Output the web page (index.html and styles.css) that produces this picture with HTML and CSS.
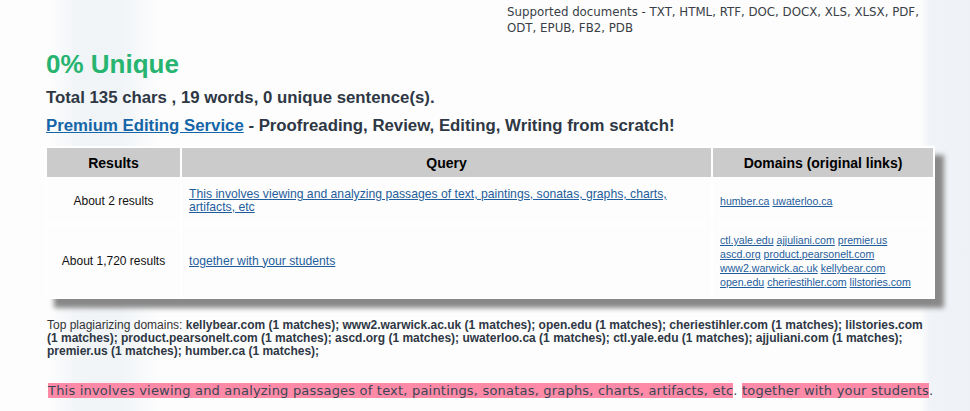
FILE: index.html
```html
<!DOCTYPE html>
<html>
<head>
<meta charset="utf-8">
<link rel="stylesheet" href="styles.css">
</head>
<body>
<div class="page">
  <div class="supported">Supported documents - TXT, HTML, RTF, DOC, DOCX, XLS, XLSX, PDF, ODT, EPUB, FB2, PDB</div>
  <h1 class="unique">0% Unique</h1>
  <p class="total">Total 135 chars , 19 words, 0 unique sentence(s).</p>
  <p class="premium"><a href="#">Premium Editing Service</a> - Proofreading, Review, Editing, Writing from scratch!</p>
  <table class="results">
    <thead>
      <tr><th class="c1">Results</th><th class="c2">Query</th><th class="c3">Domains (original links)</th></tr>
    </thead>
    <tbody>
      <tr class="r1">
        <td class="num">About 2 results</td>
        <td class="query"><a href="#">This involves viewing and analyzing passages of text, paintings, sonatas, graphs, charts, artifacts, etc</a></td>
        <td class="domains"><a href="#">humber.ca</a> <a href="#">uwaterloo.ca</a></td>
      </tr>
      <tr class="r2">
        <td class="num">About 1,720 results</td>
        <td class="query"><a href="#">together with your students</a></td>
        <td class="domains"><a href="#">ctl.yale.edu</a> <a href="#">ajjuliani.com</a> <a href="#">premier.us</a> <a href="#">ascd.org</a> <a href="#">product.pearsonelt.com</a> <a href="#">www2.warwick.ac.uk</a> <a href="#">kellybear.com</a> <a href="#">open.edu</a> <a href="#">cheriestihler.com</a> <a href="#">lilstories.com</a></td>
      </tr>
    </tbody>
  </table>
  <p class="top">Top plagiarizing domains: <b>kellybear.com (1 matches); www2.warwick.ac.uk (1 matches); open.edu (1 matches); cheriestihler.com (1 matches); lilstories.com (1 matches); product.pearsonelt.com (1 matches); ascd.org (1 matches); uwaterloo.ca (1 matches); ctl.yale.edu (1 matches); ajjuliani.com (1 matches); premier.us (1 matches); humber.ca (1 matches);</b></p>
  <p class="hl"><span class="mark">This involves viewing and analyzing passages of text, paintings, sonatas, graphs, charts, artifacts, etc</span>. <span class="mark">together with your students</span>.</p>
</div>
</body>
</html>
```
FILE: styles.css
```css
html, body {
  margin: 0;
  padding: 0;
}
body {
  background: linear-gradient(to right, #fdfdfd 0, #fdfdfd 50px, #f2f5f8 75px, #f0f4f7 120px, #fafbfc 150px, #fdfdfd 160px, #fdfdfd 920px, #f0f3f7 930px, #eef2f6 100%);
  font-family: "Liberation Sans", Arial, sans-serif;
  color: #2e3744;
  height: 411px;
  overflow: hidden;
}
.page {
  padding: 4px 0 0 46px;
  width: 910px;
}
.supported {
  margin-left: 461px;
  width: 420px;
  font-family: "DejaVu Sans", Verdana, sans-serif;
  font-size: 11.8px;
  line-height: 16px;
  color: #3a3f48;
}
.unique {
  margin: 13px 0 0;
  font-size: 26px;
  line-height: 30px;
  font-weight: bold;
  color: #27b470;
}
.total {
  margin: 9px 0 0;
  font-size: 16.8px;
  line-height: 20px;
  font-weight: bold;
}
.premium {
  margin: 8px 0 0;
  font-size: 16.8px;
  line-height: 20px;
  font-weight: bold;
}
.premium a {
  color: #1565a8;
}
.results {
  margin: 10px 0 0 -1px;
  width: 890px;
  border-collapse: separate;
  border-spacing: 2px;
  background: #fff;
  box-shadow: 9px 9px 5px #888;
}
.results th {
  background: #cbcbcb;
  color: #000;
  font-size: 14px;
  font-weight: bold;
  height: 29px;
  padding: 0;
}
.c1 { width: 133px; }
.c2 { width: 529px; }
.results td {
  background: #fdfdfd;
  font-size: 12px;
  color: #111;
  padding: 0 6px 0 7px;
}
.results td.num {
  text-align: center;
  padding: 0 6px;
}
.r1 td { height: 44px; }
.r2 td { height: 72px; }
.query {
  font-size: 12.2px !important;
  line-height: 13px;
}
.query a {
  color: #1f5d9c;
}
.domains {
  font-size: 10.6px !important;
  line-height: 14px;
}
.domains a {
  color: #1f5d9c;
}
.top {
  margin: 20px 0 0 1px;
  font-size: 12px;
  line-height: 13px;
  color: #333;
  width: 880px;
}
.top b {
  color: #2e3744;
}
.hl {
  margin: 25px 0 0 2px;
  font-family: "DejaVu Sans", Verdana, sans-serif;
  font-size: 13px;
  line-height: 16px;
  color: #3a4656;
  letter-spacing: 0.2px;
}
.mark {
  background: #ff8aa7;
}
```
